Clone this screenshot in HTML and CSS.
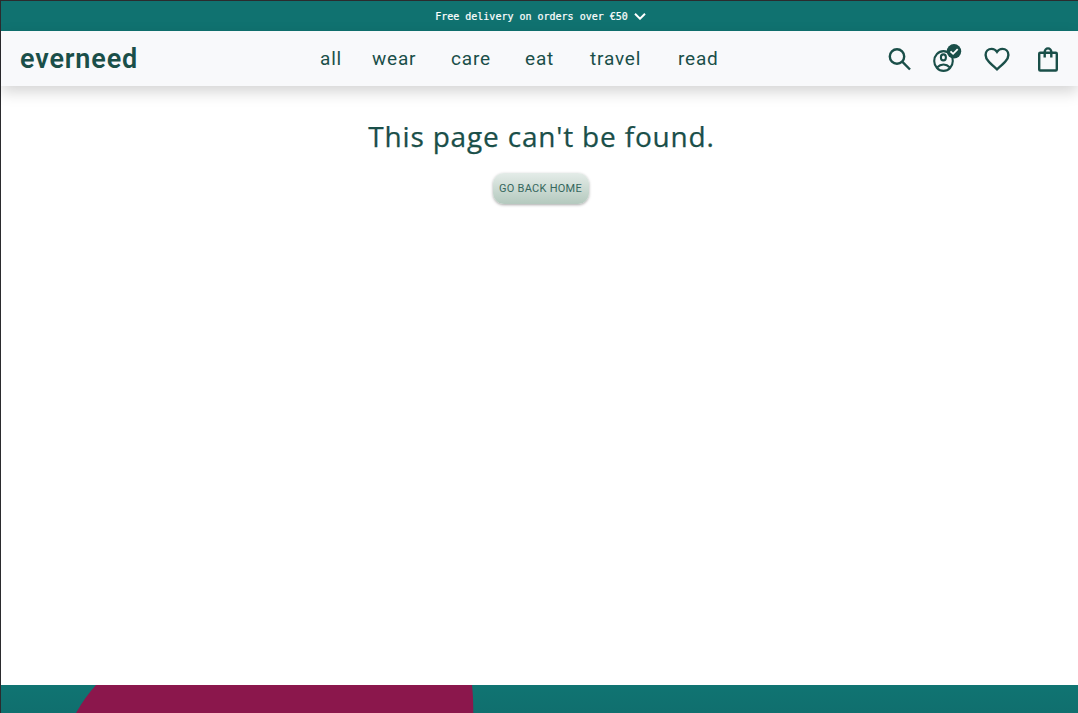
FILE: index.html
```html
<!DOCTYPE html>
<html lang="en">
<head>
<meta charset="utf-8">
<title>everneed</title>
<link rel="stylesheet" href="styles.css">
</head>
<body>
<div class="page">
  <div class="promo">
    <span>Free delivery on orders over €50</span>
    <svg class="chevron" viewBox="0 0 12 8"><path d="M1 1.7 6 6.7 11 1.7"/></svg>
  </div>
  <header class="header">
    <a class="logo">everneed</a>
    <nav class="nav">
      <a class="all">all</a><a class="wear">wear</a><a class="care">care</a><a class="eat">eat</a><a class="travel">travel</a><a class="read">read</a>
    </nav>
    <div class="actions">
      <svg class="search" viewBox="0 0 24 24"><circle cx="9" cy="9.500" r="7.200"/><path d="m14.200 14.700 7.800 7.800"/></svg>
      <svg class="account" viewBox="0 0 30 30"><ellipse cx="11.500" cy="17" rx="9.300" ry="9.900"/><ellipse cx="11.400" cy="13.400" rx="2.500" ry="3"/><path d="M5 23.600c4-4 9-4 13 0"/><circle class="badge" cx="22" cy="7.300" r="7.200"/><path class="check" d="m18.500 7.300 2.600 2.500 4.600-4.700"/></svg>
      <svg class="heart" viewBox="0 0 26 24"><path d="M13 22.300C6 16.300 1.600 12.500 1.600 7.900c0-3.500 2.600-6 6-6 2.100 0 4.100 1.100 5.400 3 1.300-1.900 3.300-3 5.400-3 3.400 0 6 2.500 6 6 0 4.600-4.400 8.400-11.400 14.400Z"/></svg>
      <svg class="bag" viewBox="0 0 22 26"><rect x="2.200" y="6.800" width="17.600" height="17.700" rx="1"/><path d="M7.700 11.500V6a3.300 3.600 0 0 1 6.600 0v5.500"/></svg>
    </div>
  </header>
  <main class="main">
    <h1>This page can't be found.</h1>
    <button class="home">GO BACK HOME</button>
  </main>
  <footer class="footer">
    <svg viewBox="0 0 1077 28"><path d="M95 0Q84 12 75 28H472.300Q472.300 12 471 0Z"/></svg>
  </footer>
</div>
</body>
</html>
```
FILE: styles.css
```css
* { box-sizing: border-box; }
body { margin: 0; background: #fff; color: #1a4f49; font-family: Roboto, sans-serif; overflow: hidden; }
.page { height: 713px; display: flex; flex-direction: column; border-left: 1px solid #2b2b2e; border-top: 1px solid #2b2b2e; }
.promo { height: 30px; flex: none; display: flex; align-items: center; justify-content: center; gap: 6px; padding-left: 2px; background: #107270; color: #fff; font: 10px "DejaVu Sans Mono", monospace; -webkit-text-stroke: .2px #fff; }
.chevron { width: 12px; height: 8px; fill: none; stroke: #fff; stroke-width: 2; }
.header { height: 55px; flex: none; display: flex; align-items: center; padding: 0 19px 0 19px; background: #f8f9fb; box-shadow: 0 6px 14px rgba(0,0,0,.17); }
.logo { width: 300px; font: 600 27px/32px Roboto, sans-serif; letter-spacing: .85px; }
.nav { display: flex; font-size: 19px; letter-spacing: .8px; }
.nav a { white-space: nowrap; }
.all { width: 52px; }
.wear { width: 79px; }
.care { width: 74px; }
.eat { width: 65px; }
.travel { width: 88px; }
.read { width: 40px; }
.actions { margin-left: auto; display: flex; align-items: center; }
.actions svg { fill: none; stroke: #1a4f49; stroke-width: 2.4; }
.search { width: 24px; height: 24px; margin-right: 20px; }
.actions .account { width: 30px; height: 30px; margin-right: 22px; stroke-width: 2.1; }
.account .badge { fill: #1a4f49; stroke: none; }
.account .check { stroke: #fff; stroke-width: 1.8; }
.heart { width: 26px; height: 24px; margin-right: 27px; }
.bag { width: 22px; height: 26px; }
.main { flex: 1; display: flex; flex-direction: column; align-items: center; padding-top: 30px; padding-left: 4px; }
h1 { margin: 0; font: 400 28px/40px "Open Sans", sans-serif; letter-spacing: .82px; white-space: nowrap; -webkit-text-stroke: .25px #1a4f49; }
.home { width: 96px; height: 31px; margin: 17px 2px 0 0; padding: 0; border: 0; border-radius: 11px; background: linear-gradient(#e4ece8, #b4c9be); box-shadow: 0 1px 3px rgba(0,0,0,.35); color: #36675d; font: 11px Roboto, sans-serif; letter-spacing: .25px; white-space: nowrap; }
.footer { height: 28px; flex: none; background: linear-gradient(#107472, #106f6e); }
.footer svg { display: block; width: 1077px; height: 28px; fill: #8b174c; }
```
